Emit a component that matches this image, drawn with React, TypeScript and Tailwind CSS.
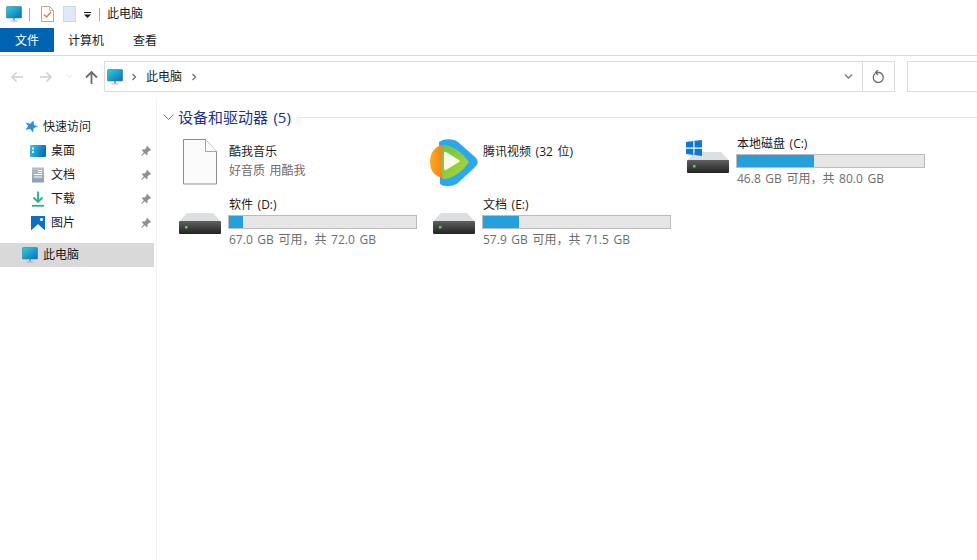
import { ChevronDown } from 'lucide-react';

const sidebarItems = [
  { label: '桌面', icon: 'desktop' },
  { label: '文档', icon: 'docs' },
  { label: '下载', icon: 'download' },
  { label: '图片', icon: 'pictures' },
];

const MonitorIcon = ({ id }: { id: string }) => (
  <svg width="16" height="16" viewBox="0 0 16 16">
    <defs>
      <linearGradient id={id} x1="0" y1="0" x2="1" y2="1">
        <stop offset="0" stopColor="#2fd0d6" />
        <stop offset="1" stopColor="#0b6cc0" />
      </linearGradient>
    </defs>
    <rect x="0.3" y="0.5" width="15.4" height="11.5" rx="1" fill={`url(#${id})`} stroke="#3a7d99" strokeWidth="0.6" />
    <rect x="7" y="12" width="2" height="2.5" fill="#8a9aa5" />
    <rect x="4.5" y="14.5" width="7" height="1" fill="#a9b4bb" />
  </svg>
);

const Arrow = ({ dir, color }: { dir: 'left' | 'right'; color: string }) => (
  <svg width="14" height="12" viewBox="0 0 14 12" fill="none" stroke={color} strokeWidth="1.5">
    {dir === 'left' ? <path d="M13 6H2M6.5 1.5 2 6l4.5 4.5" /> : <path d="M1 6h11M7.5 1.5 12 6l-4.5 4.5" />}
  </svg>
);

const Crumb = () => (
  <svg width="6" height="8" viewBox="0 0 6 8" fill="none" stroke="#707070" strokeWidth="1.3">
    <path d="M1.5 1 4.5 4l-3 3" />
  </svg>
);

const Pin = () => (
  <svg width="12" height="12" viewBox="0 0 12 12" fill="#8f8f8f">
    <path d="M7 .8 11.2 5l-1 .7-.7-.3-2 2 .1 1.9-.9.9-2-2L1.4 11l-.4-.4 2.8-3.4-2-2 .9-.9 1.9.1 2-2-.3-.7z" />
  </svg>
);

const SidebarIcon = ({ name }: { name: string }) => {
  if (name === 'desktop')
    return (
      <svg width="16" height="16" viewBox="0 0 16 16">
        <defs>
          <linearGradient id="dk" x1="0" y1="0" x2="1" y2="0.3">
            <stop offset="0" stopColor="#35c8e4" />
            <stop offset="1" stopColor="#0b6fbd" />
          </linearGradient>
        </defs>
        <rect x="0" y="2" width="16" height="12" rx="1" fill="url(#dk)" />
        <rect x="2" y="4.5" width="2" height="2" fill="#fff" />
        <rect x="2" y="8" width="2" height="2" fill="#d5f2fa" />
      </svg>
    );
  if (name === 'docs')
    return (
      <svg width="16" height="16" viewBox="0 0 16 16">
        <defs>
          <linearGradient id="dc" x1="0" y1="0" x2="0" y2="1">
            <stop offset="0" stopColor="#b4c0d0" />
            <stop offset="1" stopColor="#8b9db3" />
          </linearGradient>
        </defs>
        <rect x="2" y="0.5" width="12" height="15" fill="url(#dc)" />
        <path d="M8 3.5h4M8 5.5h4M4 7.5h8M4 10h8" stroke="#fff" strokeWidth="1" />
      </svg>
    );
  if (name === 'download')
    return (
      <svg width="16" height="16" viewBox="0 0 16 16" fill="none" stroke="#25b08c" strokeWidth="1.8">
        <path d="M8 0.5V11M3.5 6.5 8 11l4.5-4.5" />
        <path d="M2 14.8h12" />
      </svg>
    );
  return (
    <svg width="16" height="16" viewBox="0 0 16 16">
      <path d="M1 1h14v14H1z" fill="#0f6fc6" />
      <path d="M1 15.5l7-6.5 7 6.500z" fill="#e2f1fb" />
      <path d="M1 15.5 8 11l7 4.500z" fill="#fff" />
      <circle cx="11.5" cy="4.5" r="1.6" fill="#fff" />
    </svg>
  );
};

const BlankFile = () => (
  <svg width="36" height="46" viewBox="0 0 36 46" fill="none">
    <path d="M1.5.5h22l11 12v32.5h-33z" fill="#fbfbfb" stroke="#8d8d8d" />
    <path d="M23.5.5v12h11" fill="#fff" stroke="#a5a5a5" />
  </svg>
);

const TencentVideo = () => (
  <svg width="48" height="48" viewBox="0 0 48 48">
    <defs>
      <linearGradient id="tvOrange" x1="0" y1="0" x2="1" y2="0">
        <stop offset="0" stopColor="#fbae1a" />
        <stop offset="1" stopColor="#f36f21" />
      </linearGradient>
      <linearGradient id="tvGreen" x1="0" y1="0" x2="1" y2="1">
        <stop offset="0" stopColor="#6cc04a" />
        <stop offset="1" stopColor="#b4d92c" />
      </linearGradient>
    </defs>
    <path d="M9 3C15-1 24 0 28 3L45 18c3.500 3 3.500 7 0 10L28 44C24 47 15 49 10 45z" fill="#2aa7ee" />
    <path d="M13 6C4 7 0 15 0 23c0 8 4 15 14 16 3-10 3-23-1-33z" fill="url(#tvOrange)" />
    <path d="M13 6c9 0 19 7 26 17-7 10-17 17-26 17-3-10-3-24 0-34z" fill="url(#tvGreen)" />
    <path d="M14 14c0-1 1-1.500 2-1l13 8c1 .6 1 1.500 0 2l-13 8c-1 .5-2 0-2-1z" fill="#f6fce8" />
  </svg>
);

const DriveIcon = ({ id }: { id: string }) => (
  <svg width="42" height="21" viewBox="0 0 42 21">
    <defs>
      <linearGradient id={id} x1="0" y1="0" x2="0" y2="1">
        <stop offset="0" stopColor="#606060" />
        <stop offset="1" stopColor="#222" />
      </linearGradient>
    </defs>
    <path d="M8 0h26l8 8.500H0z" fill="#dcdfe2" />
    <rect x="0" y="8" width="42" height="13" rx="1" fill={`url(#${id})`} />
    <rect x="6" y="13" width="2.5" height="2.5" fill="#4fd84a" />
  </svg>
);

const WinFlag = () => (
  <svg width="16" height="16" viewBox="0 0 16 16" fill="#0f78d4">
    <path d="M0 2 7.3 1v6.500H0zM8.500.8 16 0v7.500H8.500zM0 8.700h7.300V15L0 14zM8.500 8.700H16V16l-7.500-1z" />
  </svg>
);

const DriveTile = ({ id, name, usedPct, detail, windows }: { id: string; name: string; usedPct: string; detail: string; windows?: boolean }) => (
  <div className="flex h-[61px] items-start">
    <div className="relative mt-[16.5px] ml-[1px] w-[50px] shrink-0">
      {windows && (
        <div className="absolute left-[-1px] top-[-12px]">
          <WinFlag />
        </div>
      )}
      <DriveIcon id={id} />
    </div>
    <div className="ml-[-1px] w-[189px]">
      <div className="h-[18px] pl-px text-[12px] leading-[18px] text-[#1a1a1a]">{name}</div>
      <div className="mt-px h-[14px] border border-[#bcbcbc] bg-[#e6e6e6]">
        <div className={`h-full bg-[#26a0da] ${usedPct}`} />
      </div>
      <div className="mt-[1.5px] pl-px text-[12px] leading-[18px] text-[#6d6d6d]">{detail}</div>
    </div>
  </div>
);

export default function App() {
  return (
    <div
      className="flex h-[560px] w-[977px] flex-col overflow-hidden bg-white text-[12px] text-[#1a1a1a] [word-spacing:1.5px]"
      style={{ fontFamily: '"Open Sans", "Noto Sans CJK SC", sans-serif' }}
    >
      {/* 标题栏 */}
      <div className="flex h-[28px] items-center pl-[6px]">
        <MonitorIcon id="m1" />
        <div className="ml-[7px] h-[13px] w-px bg-[#a8a8a8]" />
        <svg className="ml-[11px]" width="13" height="16" viewBox="0 0 13 16" fill="none">
          <path d="M.5.5h8l4 4v11H.5z" fill="#fff" stroke="#b9a89a" />
          <path d="M8.5.5v4h4" stroke="#c9bdb2" />
          <path d="M3 8.5 5.500 11 10 6" stroke="#dc7a50" strokeWidth="1.3" />
        </svg>
        <div className="ml-[9px] h-[16px] w-[13px] border border-[#ccd8e8] bg-[#dfe8f5]" />
        <svg className="ml-[8px] mt-[2px]" width="7" height="6" viewBox="0 0 7 6" fill="#1a1a1a">
          <path d="M0 0h7v1H0zM0 2.5h7L3.500 6z" />
        </svg>
        <div className="ml-[8px] h-[13px] w-px bg-[#a8a8a8]" />
        <span className="ml-[7px]">此电脑</span>
      </div>

      {/* 功能区选项卡 */}
      <div className="flex h-[28px] items-start border-b border-[#dadada]">
        <div className="flex h-[24px] w-[54px] items-center justify-center bg-[#0063b1] pt-[2px] text-white">文件</div>
        <div className="flex h-[24px] w-[64px] items-center justify-center pt-[2px]">计算机</div>
        <div className="flex h-[24px] w-[54px] items-center justify-center pt-[2px]">查看</div>
      </div>

      {/* 地址栏 */}
      <div className="flex h-[44px] items-start pt-[5px]">
        <div className="flex h-[31px] w-[104px] shrink-0 items-center pl-[10px]">
          <Arrow dir="left" color="#d0d0d0" />
          <div className="ml-[15px]">
            <Arrow dir="right" color="#d0d0d0" />
          </div>
          <ChevronDown className="ml-[12px] text-[#d0d0d0]" size={9} strokeWidth={2} />
          <svg className="ml-[11px]" width="13" height="14" viewBox="0 0 13 14" fill="none" stroke="#6d6d6d" strokeWidth="1.8">
            <path d="M6.5 14V2M1 7.500 6.500 2 12 7.500" />
          </svg>
        </div>
        <div className="flex h-[31px] w-[791px] shrink-0 items-center border border-[#dcdcdc]">
          <div className="ml-[2px]">
            <MonitorIcon id="m2" />
          </div>
          <div className="ml-[8px]">
            <Crumb />
          </div>
          <span className="ml-[9px]">此电脑</span>
          <div className="ml-[9px]">
            <Crumb />
          </div>
          <div className="ml-auto flex h-full w-[32px] items-center justify-center border-r border-[#dcdcdc] pl-[3px]">
            <ChevronDown className="text-[#6d6d6d]" size={13} strokeWidth={2.5} />
          </div>
          <div className="flex h-full w-[31px] items-center justify-center">
            <svg width="13" height="14" viewBox="0 0 13 14" fill="none" stroke="#6d6d6d" strokeWidth="1.3">
              <path d="M3.2 3.500a5 5 0 1 0 4-1H3.500" />
              <path d="M6 0 3.500 2.500 6 5" />
            </svg>
          </div>
        </div>
        <div className="ml-[12px] h-[31px] flex-1 border-y border-l border-[#dcdcdc]" />
      </div>

      <div className="flex flex-1">
        {/* 侧边栏 */}
        <div className="w-[157px] shrink-0 border-r border-[#f2f2f2] pt-[15px]">
          <div className="flex h-[24px] items-center pl-[24px]">
            <svg width="14" height="14" viewBox="0 0 14 14">
              <path d="M9.5.5l.5 4.500 4 1.500-4.300 1.500-.7 4.500-2.800-3.500-4.700.8 2.700-3.800L1.500 2.500l4.700 1.300z" fill="#2a8fe2" />
            </svg>
            <span className="ml-[5px]">快速访问</span>
          </div>
          {sidebarItems.map((item) => (
            <div key={item.label} className="flex h-[24px] items-center pl-[30px] pr-[4px]">
              <SidebarIcon name={item.icon} />
              <span className="ml-[5px]">{item.label}</span>
              <div className="ml-auto">
                <Pin />
              </div>
            </div>
          ))}
          <div className="mt-[8px] mr-[2px] flex h-[24px] items-center bg-[#d9d9d9] pl-[22px]">
            <MonitorIcon id="m3" />
            <span className="ml-[5px]">此电脑</span>
          </div>
        </div>

        {/* 内容区 */}
        <div className="flex-1 pl-[6px] pt-[4px]">
          <div className="flex h-[26px] items-center">
            <svg width="11" height="7" viewBox="0 0 11 7" fill="none" stroke="#7a7a7a">
              <path d="M.5.5 5.500 5.500 10.500.5" />
            </svg>
            <span className="ml-[4px] text-[15px] text-[#1e3287]">设备和驱动器 (5)</span>
            <div className="ml-[8px] h-px flex-1 bg-[#e2e2e2]" />
          </div>
          <div className="mt-[5px] grid grid-cols-[254px_254px_254px] pl-[15px]">
            <div className="flex h-[61px] items-start">
              <div className="ml-[4px] mt-[4px] w-[47px] shrink-0">
                <BlankFile />
              </div>
              <div className="pt-[8px] leading-[18px]">
                <div>酷我音乐</div>
                <div className="mt-px text-[#6d6d6d]">好音质 用酷我</div>
              </div>
            </div>
            <div className="flex h-[61px] items-start">
              <div className="ml-[-2px] mt-[4px] w-[53px] shrink-0">
                <TencentVideo />
              </div>
              <div className="pt-[8px] leading-[18px]">腾讯视频 (32 位)</div>
            </div>
            <DriveTile id="d1" name="本地磁盘 (C:)" usedPct="w-[41%]" detail="46.8 GB 可用，共 80.0 GB" windows />
            <DriveTile id="d2" name="软件 (D:)" usedPct="w-[7.5%]" detail="67.0 GB 可用，共 72.0 GB" />
            <DriveTile id="d3" name="文档 (E:)" usedPct="w-[19%]" detail="57.9 GB 可用，共 71.5 GB" />
          </div>
        </div>
      </div>
    </div>
  );
}
